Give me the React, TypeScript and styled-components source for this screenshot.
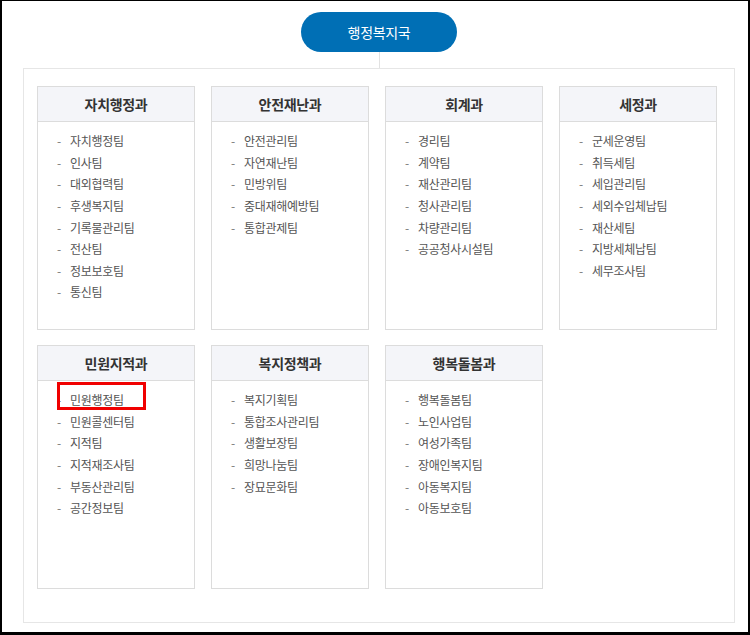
import styled, { createGlobalStyle } from 'styled-components';

type Dept = {
  name: string;
  teams: string[];
};

const rows: Dept[][] = [
  [
    {
      name: '자치행정과',
      teams: ['자치행정팀', '인사팀', '대외협력팀', '후생복지팀', '기록물관리팀', '전산팀', '정보보호팀', '통신팀'],
    },
    {
      name: '안전재난과',
      teams: ['안전관리팀', '자연재난팀', '민방위팀', '중대재해예방팀', '통합관제팀'],
    },
    {
      name: '회계과',
      teams: ['경리팀', '계약팀', '재산관리팀', '청사관리팀', '차량관리팀', '공공청사시설팀'],
    },
    {
      name: '세정과',
      teams: ['군세운영팀', '취득세팀', '세입관리팀', '세외수입체납팀', '재산세팀', '지방세체납팀', '세무조사팀'],
    },
  ],
  [
    {
      name: '민원지적과',
      teams: ['민원행정팀', '민원콜센터팀', '지적팀', '지적재조사팀', '부동산관리팀', '공간정보팀'],
    },
    {
      name: '복지정책과',
      teams: ['복지기획팀', '통합조사관리팀', '생활보장팀', '희망나눔팀', '장묘문화팀'],
    },
    {
      name: '행복돌봄과',
      teams: ['행복돌봄팀', '노인사업팀', '여성가족팀', '장애인복지팀', '아동복지팀', '아동보호팀'],
    },
  ],
];

const highlighted = '민원행정팀';

export default function App() {
  return (
    <>
      <GlobalStyle />
      <Frame>
        <Chart>
          <TopNode>행정복지국</TopNode>
          <Connector />
          <Board>
            {rows.map((row, i) => (
              <Row key={i}>
                {row.map((dept) => (
                  <Card key={dept.name}>
                    <CardHeader>{dept.name}</CardHeader>
                    <TeamList>
                      {dept.teams.map((team) => (
                        <TeamItem key={team}>
                          <Dash>-</Dash>
                          <TeamName>{team}</TeamName>
                          {team === highlighted && <Highlight />}
                        </TeamItem>
                      ))}
                    </TeamList>
                  </Card>
                ))}
              </Row>
            ))}
          </Board>
        </Chart>
      </Frame>
    </>
  );
}

const GlobalStyle = createGlobalStyle`
  * {
    box-sizing: border-box;
  }
  body {
    margin: 0;
    background: #fff;
    font-family: "Noto Sans CJK KR", "Noto Sans", sans-serif;
  }
`;

const Frame = styled.div`
  width: 750px;
  height: 635px;
  border-style: solid;
  border-color: #000;
  border-width: 1px 2px 3px 2px;
  padding: 11px 0 0 21px;
`;

const Chart = styled.div`
  width: 712px;
  display: flex;
  flex-direction: column;
  align-items: center;
`;

const TopNode = styled.div`
  width: 156px;
  height: 40px;
  border-radius: 20px;
  background: #006fb5;
  color: #fff;
  font-size: 14px;
  display: flex;
  align-items: center;
  justify-content: center;
  letter-spacing: -0.3px;
`;

const Connector = styled.div`
  width: 1px;
  height: 16px;
  background: #e2e2e2;
`;

const Board = styled.div`
  align-self: stretch;
  height: 555px;
  border: 1px solid #e6e6e6;
  padding: 17px 0 0 13px;
  display: flex;
  flex-direction: column;
  gap: 15px;
`;

const Row = styled.div`
  display: flex;
  gap: 16px;
`;

const Card = styled.div`
  width: 158px;
  height: 244px;
  border: 1px solid #dcdcdc;
  background: #fff;
`;

const CardHeader = styled.div`
  height: 35px;
  background: #f4f5f9;
  border-bottom: 1px solid #dcdcdc;
  display: flex;
  align-items: center;
  justify-content: center;
  font-size: 14px;
  font-weight: 700;
  color: #333;
  letter-spacing: -0.3px;
`;

const TeamList = styled.ul`
  list-style: none;
  margin: 0;
  padding: 8px 0 0 19px;
`;

const TeamItem = styled.li`
  position: relative;
  display: flex;
  align-items: center;
  height: 21.6px;
  font-size: 12px;
  color: #555;
  letter-spacing: -0.3px;
`;

const Dash = styled.span`
  width: 13px;
  color: #777;
`;

const TeamName = styled.span``;

const Highlight = styled.span`
  position: absolute;
  left: 0;
  top: -7px;
  width: 89px;
  height: 28px;
  border: 3px solid #f00000;
`;
